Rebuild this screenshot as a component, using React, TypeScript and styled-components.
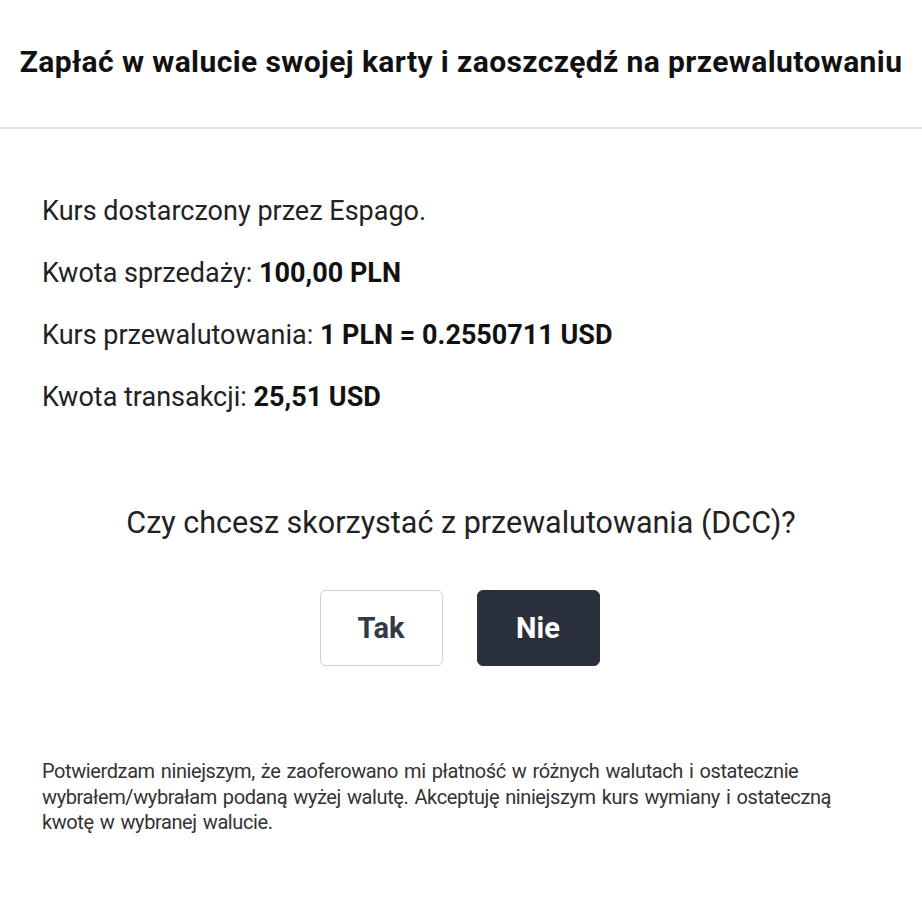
import { createGlobalStyle, styled } from "styled-components";

const GlobalStyle = createGlobalStyle`
    html, body {
        margin: 0;
        padding: 0;
        background: #ffffff;
        font-family: Roboto, "Noto Sans", sans-serif;
    }
`;

function App() {
    return (
        <>
            <GlobalStyle />
            <StyledPage>
                <StyledHeader>
                    <StyledTitle>Zapłać w walucie swojej karty i zaoszczędź na przewalutowaniu</StyledTitle>
                </StyledHeader>
                <StyledBody>
                    <StyledDetails>
                        <StyledLine>Kurs dostarczony przez Espago.</StyledLine>
                        <StyledLine>Kwota sprzedaży: <b>100,00 PLN</b></StyledLine>
                        <StyledLine>Kurs przewalutowania: <b>1 PLN = 0.2550711 USD</b></StyledLine>
                        <StyledLine>Kwota transakcji: <b>25,51 USD</b></StyledLine>
                    </StyledDetails>
                    <StyledQuestion>Czy chcesz skorzystać z przewalutowania (DCC)?</StyledQuestion>
                    <StyledButtons>
                        <StyledButton>Tak</StyledButton>
                        <StyledButton $primary>Nie</StyledButton>
                    </StyledButtons>
                    <StyledDisclaimer>
                        Potwierdzam niniejszym, że zaoferowano mi płatność w różnych walutach i ostatecznie<br />
                        wybrałem/wybrałam podaną wyżej walutę. Akceptuję niniejszym kurs wymiany i ostateczną<br />
                        kwotę w wybranej walucie.
                    </StyledDisclaimer>
                </StyledBody>
            </StyledPage>
        </>
    );
}

const StyledPage = styled.div`
    width: 922px;
    height: 900px;
    background: #ffffff;
    color: #222222;
`;

const StyledHeader = styled.div`
    height: 127px;
    display: flex;
    align-items: center;
    justify-content: center;
    border-bottom: 2px solid #e2e2e2;
`;

const StyledTitle = styled.h1`
    margin: 0 0 4px 0;
    font-size: 30px;
    letter-spacing: 0.4px;
    font-weight: 700;
    color: #111111;
    white-space: nowrap;
`;

const StyledBody = styled.div`
    padding: 0 42px;
    display: flex;
    flex-direction: column;
`;

const StyledDetails = styled.div`
    padding-top: 66px;
    display: flex;
    flex-direction: column;
    gap: 30px;
`;

const StyledLine = styled.div`
    font-size: 27px;
    line-height: 32px;
    color: #222222;

    b {
        font-weight: 700;
        color: #111111;
    }
`;

const StyledQuestion = styled.div`
    margin-top: 92px;
    text-align: center;
    font-size: 30.5px;
    line-height: 36px;
    color: #222222;
`;

const StyledButtons = styled.div`
    margin-top: 49px;
    display: flex;
    justify-content: center;
    gap: 34px;
    padding-right: 3px;
`;

const StyledButton = styled.button<{ $primary?: boolean }>`
    width: 123px;
    height: 76px;
    border-radius: 6px;
    font-family: Roboto, sans-serif;
    font-size: 29px;
    font-weight: 700;
    border: 1.5px solid ${({ $primary }) => ($primary ? "#2a303b" : "#cfcfcf")};
    background: ${({ $primary }) => ($primary ? "#2a303b" : "#ffffff")};
    color: ${({ $primary }) => ($primary ? "#ffffff" : "#333a45")};
`;

const StyledDisclaimer = styled.p`
    margin: 93px 0 0 0;
    font-size: 20px;
    line-height: 25.5px;
    color: #333333;
    letter-spacing: -0.4px;
    word-spacing: 1.5px;
    white-space: nowrap;
`;

export default App;
